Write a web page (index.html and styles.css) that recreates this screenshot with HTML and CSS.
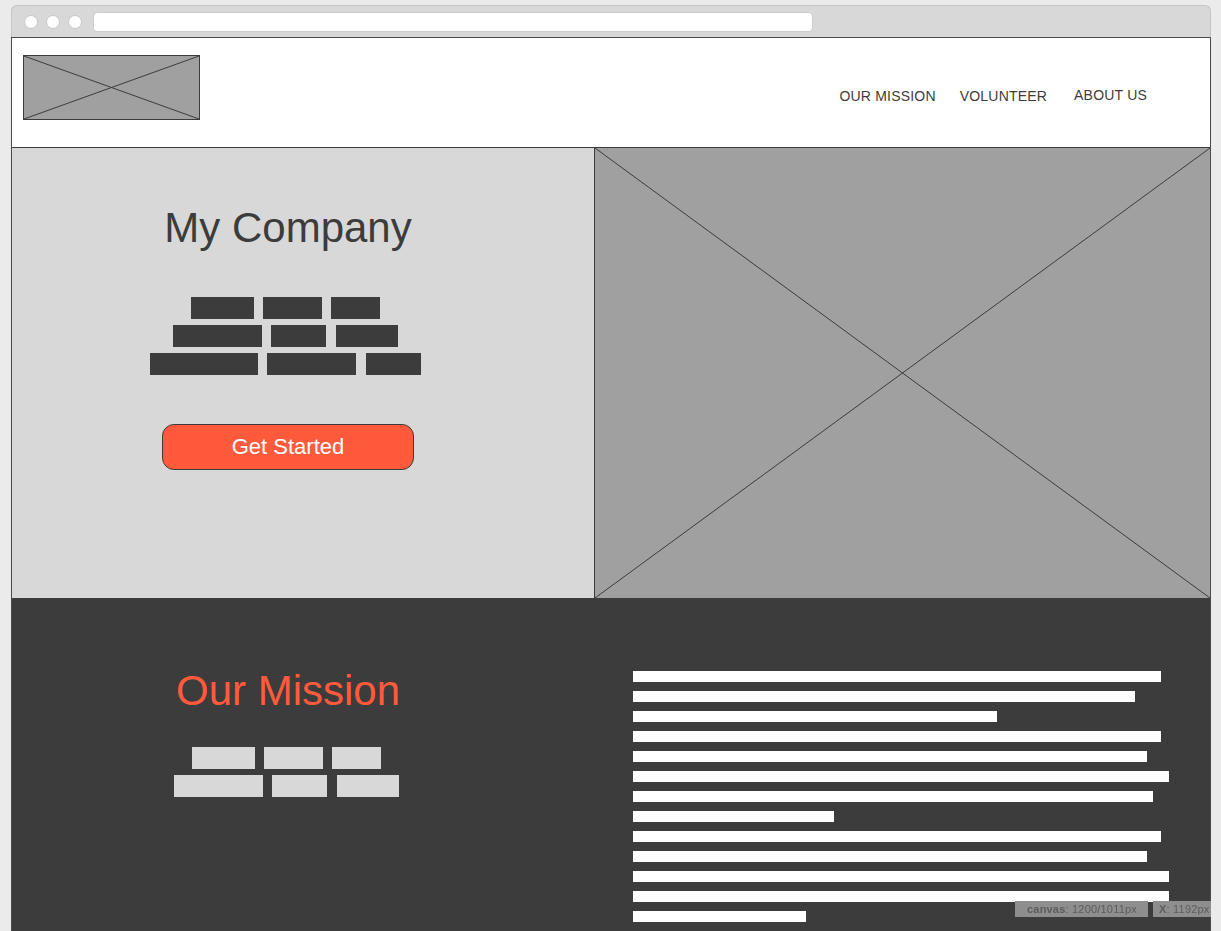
FILE: index.html
```html
<!DOCTYPE html>
<html lang="en">
<head>
<meta charset="utf-8">
<title>My Company</title>
<link rel="stylesheet" href="styles.css">
</head>
<body>
<div class="window">
  <div class="titlebar">
    <span class="dot"></span><span class="dot"></span><span class="dot"></span>
    <div class="urlbar"></div>
  </div>
  <div class="page">
    <header class="site-header">
      <div class="logo">
        <svg viewBox="0 0 175 63" preserveAspectRatio="none"><line x1="0" y1="0" x2="175" y2="63"/><line x1="175" y1="0" x2="0" y2="63"/></svg>
      </div>
      <nav class="nav">
        <a class="nav-link">OUR MISSION</a>
        <a class="nav-link">VOLUNTEER</a>
        <a class="nav-link nav-about">ABOUT US</a>
      </nav>
    </header>
    <section class="hero">
      <div class="hero-text">
        <h1 class="title">My Company</h1>
        <div class="bricks bricks-dark">
          <div class="brick-row"><span class="brick" style="width:63px"></span><span class="brick" style="width:59px"></span><span class="brick" style="width:49px"></span></div>
          <div class="brick-row brick-row-wide"><span class="brick" style="width:89px"></span><span class="brick" style="width:55px"></span><span class="brick" style="width:62px"></span></div>
          <div class="brick-row brick-row-wide"><span class="brick" style="width:108px"></span><span class="brick" style="width:89px"></span><span class="brick" style="width:55px"></span></div>
        </div>
        <button class="btn">Get Started</button>
      </div>
      <div class="hero-image">
        <svg viewBox="0 0 615 450" preserveAspectRatio="none"><line x1="0" y1="0" x2="615" y2="450"/><line x1="615" y1="0" x2="0" y2="450"/></svg>
      </div>
    </section>
    <section class="mission">
      <div class="mission-left">
        <h2 class="title title-accent">Our Mission</h2>
        <div class="bricks bricks-light">
          <div class="brick-row"><span class="brick" style="width:63px"></span><span class="brick" style="width:59px"></span><span class="brick" style="width:49px"></span></div>
          <div class="brick-row brick-row-wide"><span class="brick" style="width:89px"></span><span class="brick" style="width:55px"></span><span class="brick" style="width:62px"></span></div>
        </div>
      </div>
      <div class="mission-right">
        <div class="text-lines">
          <span class="line" style="width:528px"></span>
          <span class="line" style="width:502px"></span>
          <span class="line" style="width:364px"></span>
          <span class="line" style="width:528px"></span>
          <span class="line" style="width:514px"></span>
          <span class="line" style="width:536px"></span>
          <span class="line" style="width:520px"></span>
          <span class="line" style="width:201px"></span>
          <span class="line" style="width:528px"></span>
          <span class="line" style="width:514px"></span>
          <span class="line" style="width:536px"></span>
          <span class="line" style="width:536px"></span>
          <span class="line" style="width:173px"></span>
        </div>
      </div>
    </section>
  </div>
</div>
<div class="canvas-info">
  <span class="info-box info-canvas"><b>canvas</b>: 1200/1011px</span>
  <span class="info-box info-x"><b>X</b>: 1192px</span>
</div>
</body>
</html>
```
FILE: styles.css
```css
* { box-sizing: border-box; }

body {
  margin: 0;
  background: #ebebeb;
  font-family: "Liberation Sans", Arial, sans-serif;
  color: #3c3c3c;
}

.window {
  width: 1200px;
  margin: 5px 0 0 11px;
}

.titlebar {
  height: 32px;
  background: #d8d8d8;
  border: 1px solid #c4c4c4;
  border-bottom: 0;
  border-radius: 6px 6px 0 0;
  display: flex;
  align-items: center;
  padding-left: 12px;
}

.dot {
  width: 14px;
  height: 14px;
  border-radius: 50%;
  background: #fff;
  border: 1px solid #c8c8c8;
  margin-right: 8px;
}

.urlbar {
  margin-left: 3px;
  width: 720px;
  height: 20px;
  background: #fff;
  border: 1px solid #cccccc;
  border-radius: 4px;
}

.page {
  border: 1px solid #4a4a4a;
  border-bottom: 0;
  background: #fff;
}

.site-header {
  height: 110px;
  border-bottom: 1px solid #3c3c3c;
  display: flex;
  justify-content: space-between;
  align-items: flex-start;
  padding: 17px 63px 0 11px;
}

.logo {
  width: 177px;
  height: 65px;
  border: 1px solid #3c3c3c;
  background: #a0a0a0;
}

.logo svg,
.hero-image svg {
  display: block;
  width: 100%;
  height: 100%;
}

.logo line,
.hero-image line {
  stroke: #3c3c3c;
  stroke-width: 1;
  vector-effect: non-scaling-stroke;
}

.nav {
  display: flex;
  align-items: flex-start;
  margin-top: 33px;
}

.nav-link {
  font-size: 14px;
  line-height: 16px;
  letter-spacing: 0.2px;
  color: #3c3c3c;
  text-decoration: none;
  margin-left: 24px;
}

.nav-about {
  margin-left: 27px;
  margin-top: -1px;
}

.hero {
  display: grid;
  grid-template-columns: 582px 1fr;
  height: 450px;
}

.hero-text {
  background: #d8d8d8;
  padding: 56px 30px 0 0;
  display: flex;
  flex-direction: column;
  align-items: center;
}

.title {
  margin: 0;
  font-size: 42px;
  line-height: 48px;
  font-weight: normal;
  color: #3c3c3c;
}

.title-accent {
  color: #ff5a3c;
}

.bricks {
  display: flex;
  flex-direction: column;
  align-items: center;
  gap: 6px;
}

.bricks-dark {
  margin: 45px 6px 0 0;
}

.bricks-light {
  margin: 32px 4px 0 0;
}

.brick-row {
  display: flex;
  gap: 9px;
}

.brick-row-wide .brick:last-child {
  margin-left: 1px;
}

.brick {
  height: 22px;
}

.bricks-dark .brick { background: #3c3c3c; }
.bricks-light .brick { background: #d8d8d8; }

.btn {
  margin-top: 49px;
  width: 252px;
  height: 46px;
  background: #ff5a3c;
  border: 1px solid #3c3c3c;
  border-radius: 12px;
  color: #fff;
  font-family: "Liberation Sans", Arial, sans-serif;
  font-size: 22px;
  padding: 0;
}

.hero-image {
  background: #a0a0a0;
  border-left: 1px solid #3c3c3c;
}

.mission {
  display: grid;
  grid-template-columns: 582px 1fr;
  background: #3c3c3c;
  min-height: 420px;
}

.mission-left {
  padding: 69px 30px 0 0;
  display: flex;
  flex-direction: column;
  align-items: center;
}

.mission-right {
  padding: 73px 0 0 39px;
}

.text-lines {
  display: flex;
  flex-direction: column;
  gap: 9px;
}

.line {
  display: block;
  height: 11px;
  background: #fff;
}

.canvas-info {
  position: fixed;
  right: 10px;
  bottom: 14px;
  display: flex;
  gap: 5px;
  font-size: 11px;
  letter-spacing: 0.2px;
  line-height: 16px;
  color: #5c5c5c;
}

.info-box {
  background: #8e8e8e;
  height: 16px;
  white-space: nowrap;
}

.info-canvas {
  width: 133px;
  padding-left: 12px;
}

.info-x {
  width: 58px;
  padding-left: 6px;
}
```
